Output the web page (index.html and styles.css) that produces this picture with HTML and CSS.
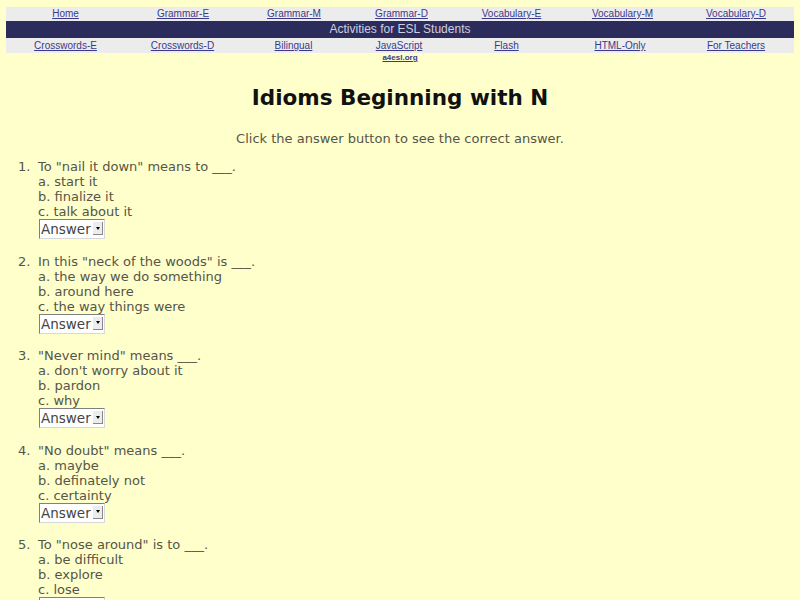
FILE: index.html
```html
<!DOCTYPE html>
<html>
<head>
<meta charset="utf-8">
<title>Idioms Beginning with N</title>
<link rel="stylesheet" href="styles.css">
</head>
<body>
<div class="nav">
  <div class="nav-row row-top">
    <a href="#">Home</a>
    <a href="#">Grammar-E</a>
    <a href="#">Grammar-M</a>
    <a href="#">Grammar-D</a>
    <a href="#">Vocabulary-E</a>
    <a href="#">Vocabulary-M</a>
    <a href="#">Vocabulary-D</a>
  </div>
  <div class="nav-banner">Activities for ESL Students</div>
  <div class="nav-row row-bottom">
    <a href="#">Crosswords-E</a>
    <a href="#">Crosswords-D</a>
    <a href="#">Bilingual</a>
    <a href="#">JavaScript</a>
    <a href="#">Flash</a>
    <a href="#">HTML-Only</a>
    <a href="#">For Teachers</a>
  </div>
</div>
<div class="sitelink"><a href="#">a4esl.org</a></div>

<h1 class="title">Idioms Beginning with N</h1>
<p class="intro">Click the answer button to see the correct answer.</p>

<div class="quiz">
  <div class="q">
    <span class="num">1.</span>
    <div class="body">
      <div>To "nail it down" means to ___.</div>
      <div>a. start it</div>
      <div>b. finalize it</div>
      <div>c. talk about it</div>
      <div class="answer"><select><option>Answer</option></select><span class="arrow"></span></div>
    </div>
  </div>
  <div class="q">
    <span class="num">2.</span>
    <div class="body">
      <div>In this "neck of the woods" is ___.</div>
      <div>a. the way we do something</div>
      <div>b. around here</div>
      <div>c. the way things were</div>
      <div class="answer"><select><option>Answer</option></select><span class="arrow"></span></div>
    </div>
  </div>
  <div class="q">
    <span class="num">3.</span>
    <div class="body">
      <div>"Never mind" means ___.</div>
      <div>a. don't worry about it</div>
      <div>b. pardon</div>
      <div>c. why</div>
      <div class="answer"><select><option>Answer</option></select><span class="arrow"></span></div>
    </div>
  </div>
  <div class="q">
    <span class="num">4.</span>
    <div class="body">
      <div>"No doubt" means ___.</div>
      <div>a. maybe</div>
      <div>b. definately not</div>
      <div>c. certainty</div>
      <div class="answer"><select><option>Answer</option></select><span class="arrow"></span></div>
    </div>
  </div>
  <div class="q">
    <span class="num">5.</span>
    <div class="body">
      <div>To "nose around" is to ___.</div>
      <div>a. be difficult</div>
      <div>b. explore</div>
      <div>c. lose</div>
      <div class="answer"><select><option>Answer</option></select><span class="arrow"></span></div>
    </div>
  </div>
</div>
</body>
</html>
```
FILE: styles.css
```css
html, body {
  margin: 0;
  padding: 0;
  background: #ffffcc;
}
body {
  font-family: "DejaVu Sans", Verdana, sans-serif;
  font-size: 13px;
  color: #555548;
}
.nav {
  margin: 7px 6px 0 6px;
  font-family: "Liberation Sans", Arial, sans-serif;
  font-size: 10px;
}
.nav-row {
  display: grid;
  background: #ececec;
  text-align: center;
}
.row-top {
  grid-template-columns: 119px 116px 106px 109px 111px 111px 1fr;
  height: 14px;
  line-height: 14px;
}
.row-bottom {
  grid-template-columns: 119px 115px 107px 104px 111px 116px 1fr;
  height: 15px;
  line-height: 15px;
}
.nav-row a {
  color: #3a3a8a;
  text-decoration: underline;
}
.nav-banner {
  background: #2c2c5c;
  color: #cfcfe0;
  font-size: 12px;
  height: 17px;
  line-height: 17px;
  text-align: center;
}
.sitelink {
  text-align: center;
  height: 9px;
  line-height: 9px;
  font-family: "Liberation Sans", Arial, sans-serif;
  font-size: 8px;
  font-weight: bold;
}
.sitelink a {
  color: #3a3a8a;
}
.title {
  margin: 21px 0 0 0;
  height: 30px;
  line-height: 30px;
  text-align: center;
  font-family: "DejaVu Sans", sans-serif;
  font-weight: bold;
  font-size: 21.5px;
  color: #111111;
}
.intro {
  margin: 18px 0 0 0;
  line-height: 15px;
  text-align: center;
  color: #555548;
}
.quiz {
  margin-top: 13px;
}
.q {
  display: flex;
  line-height: 15px;
  margin-bottom: 14.5px;
  padding-left: 18px;
}
.num {
  width: 20px;
  flex: none;
}
.body {
  display: flex;
  flex-direction: column;
  align-items: flex-start;
}
.answer {
  position: relative;
  margin-left: 1px;
  width: 64px;
  height: 18px;
  border: 1px solid;
  border-color: #808080 #d8d8d8 #d8d8d8 #808080;
  background: #ffffff;
}
.answer select {
  -webkit-appearance: none;
  appearance: none;
  border: none;
  outline: none;
  background: transparent;
  margin: 0;
  padding: 0 0 0 1px;
  width: 100%;
  height: 18px;
  font-family: "DejaVu Sans", Verdana, sans-serif;
  font-size: 13.5px;
  color: #444444;
}
.arrow {
  position: absolute;
  right: 1px;
  top: 2px;
  width: 9px;
  height: 12px;
  background: #ececec;
  border-right: 1px solid #888888;
  border-bottom: 1px solid #888888;
  display: flex;
  align-items: center;
  justify-content: center;
}
.arrow::after {
  content: "";
  width: 0;
  height: 0;
  border-left: 2.5px solid transparent;
  border-right: 2.5px solid transparent;
  border-top: 3px solid #000000;
}
```
